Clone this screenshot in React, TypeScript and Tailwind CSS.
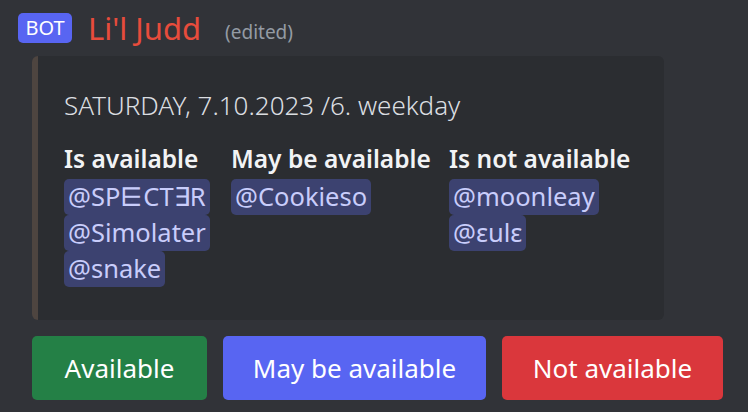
const fields = [
  { name: "Is available", users: ["@SP⋿CT∃R", "@Simolater", "@snake"], width: "w-[151px]" },
  { name: "May be available", users: ["@Cookieso"], width: "w-[202px]" },
  { name: "Is not available", users: ["@moonleay", "@εulε"], width: "w-[190px]" },
];

const buttons = [
  { label: "Available", className: "w-[175px] bg-[#248046]" },
  { label: "May be available", className: "w-[263px] bg-[#5865f2]" },
  { label: "Not available", className: "w-[221px] bg-[#da373c]" },
];

function Mention({ name }: { name: string }) {
  return (
    <div className="flex">
      <span className="flex h-[36px] items-center rounded-[5px] bg-[#3c4270] px-[4px] text-[25.5px] leading-none text-[#c9cdfb]">
        {name}
      </span>
    </div>
  );
}

function Field({ name, users, width }: { name: string; users: string[]; width: string }) {
  return (
    <div className={`flex flex-col ${width}`}>
      <div className="h-[35px] whitespace-nowrap text-[24.5px] font-semibold leading-[30px] text-[#f2f3f5]">
        {name}
      </div>
      {users.map((u) => (
        <Mention key={u} name={u} />
      ))}
    </div>
  );
}

export default function App() {
  return (
    <div className="min-h-[412px] w-[748px] bg-[#313338] pt-[13px] pl-[18px] font-['Noto_Sans',sans-serif]">
      <div className="flex h-[30px] items-center">
        <span className="flex h-[30px] w-[54px] items-center justify-center rounded-[5px] bg-[#5865f2] text-[20px] text-white">
          BOT
        </span>
        <span className="ml-4 text-[31px] leading-none text-[#e74c3c]">Li'l Judd</span>
        <span className="ml-6 mt-[8px] text-[19px] leading-none text-[#949ba4]">(edited)</span>
      </div>

      <div className="mt-[13px] ml-[14px] h-[264px] w-[632px] rounded-[6px] border-l-[6px] border-[#4e4540] bg-[#2b2d31] pl-[26px] pt-[33px]">
        <div className="text-[26px] font-light leading-[32px] text-[#dbdee1]">
          SATURDAY, 7.10.2023 /6. weekday
        </div>
        <div className="mt-[23px] flex gap-4">
          {fields.map((f) => (
            <Field key={f.name} {...f} />
          ))}
        </div>
      </div>

      <div className="mt-4 ml-[14px] flex gap-4">
        {buttons.map((b) => (
          <button
            key={b.label}
            className={`flex h-[64px] items-center justify-center rounded-[5px] text-[26px] text-white ${b.className}`}
          >
            {b.label}
          </button>
        ))}
      </div>
    </div>
  );
}
